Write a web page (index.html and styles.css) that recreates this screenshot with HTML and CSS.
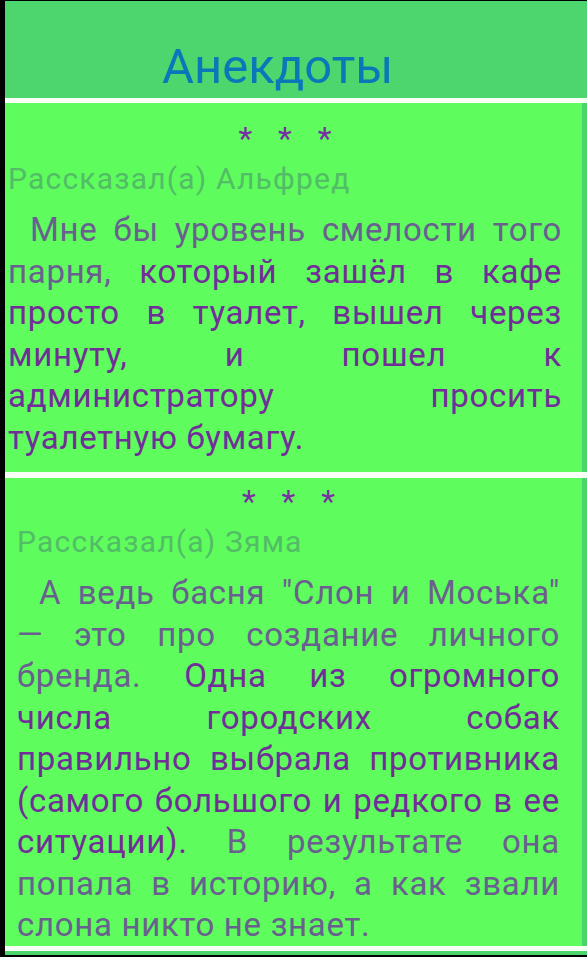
FILE: index.html
```html
<!DOCTYPE html>
<html lang="ru">
<head>
<meta charset="utf-8">
<title>Анекдоты</title>
<link rel="stylesheet" href="styles.css">
</head>
<body>
<div class="app">
  <header class="header">
    <h1 class="title">Анекдоты</h1>
  </header>
  <div class="divider"></div>
  <article class="card card-first">
    <div class="stars">* * *</div>
    <div class="author">Рассказал(а) Альфред</div>
    <p class="joke"><span class="muted">Мне бы уровень смелости того парня,</span> <span class="accent">который зашёл в кафе просто в туалет, вышел через минуту, и пошел к администратору просить туалетную бумагу.</span></p>
  </article>
  <div class="divider divider-thick"></div>
  <article class="card card-second">
    <div class="stars">* * *</div>
    <div class="author">Рассказал(а) Зяма</div>
    <p class="joke"><span class="muted">А ведь басня "Слон и Моська" —&nbsp;это про создание личного бренда.</span> <span class="accent">Одна из огромного числа городских собак правильно выбрала противника (самого большого и редкого в ее ситуации).</span> <span class="muted">В результате она попала в историю, а как звали слона никто не знает.</span></p>
  </article>
  <div class="divider"></div>
</div>
</body>
</html>
```
FILE: styles.css
```css
html, body {
  margin: 0;
  padding: 0;
  background: #000;
}

body {
  width: 587px;
  height: 957px;
  overflow: hidden;
  font-family: Roboto, "Noto Sans", sans-serif;
}

.app {
  margin: 1px 0 0 5px;
  height: 954px;
  background: #4cd56c;
  display: flex;
  flex-direction: column;
}

.header {
  box-sizing: border-box;
  height: 97px;
  padding: 37px 0 0 157px;
  background: #4cd66d;
}

.title {
  margin: 0;
  font-family: Roboto, "Noto Sans", sans-serif;
  font-weight: 400;
  font-size: 49px;
  line-height: 58px;
  color: #0b77b8;
}

.divider {
  height: 5px;
  background: #f7fff6;
}

.divider-thick {
  height: 6px;
}

.card {
  margin-right: 5px;
  background: #5efc5c;
}

.card-first {
  padding: 18px 20px 14px 3px;
}

.card-second {
  padding: 6px 22px 0 12px;
}

.stars {
  text-align: center;
  font-size: 32px;
  line-height: 34px;
  word-spacing: 18px;
  color: #7a2ea4;
}

.author {
  margin-top: 6px;
  font-size: 30px;
  line-height: 36px;
  letter-spacing: 1.2px;
  color: #52bd66;
}

.joke {
  margin: 12px 0 0;
  font-size: 33px;
  line-height: 41.5px;
  letter-spacing: 0.7px;
  text-align: justify;
  text-indent: 22px;
}

.muted {
  color: #6a608f;
}

.accent {
  color: #722e98;
}
```
